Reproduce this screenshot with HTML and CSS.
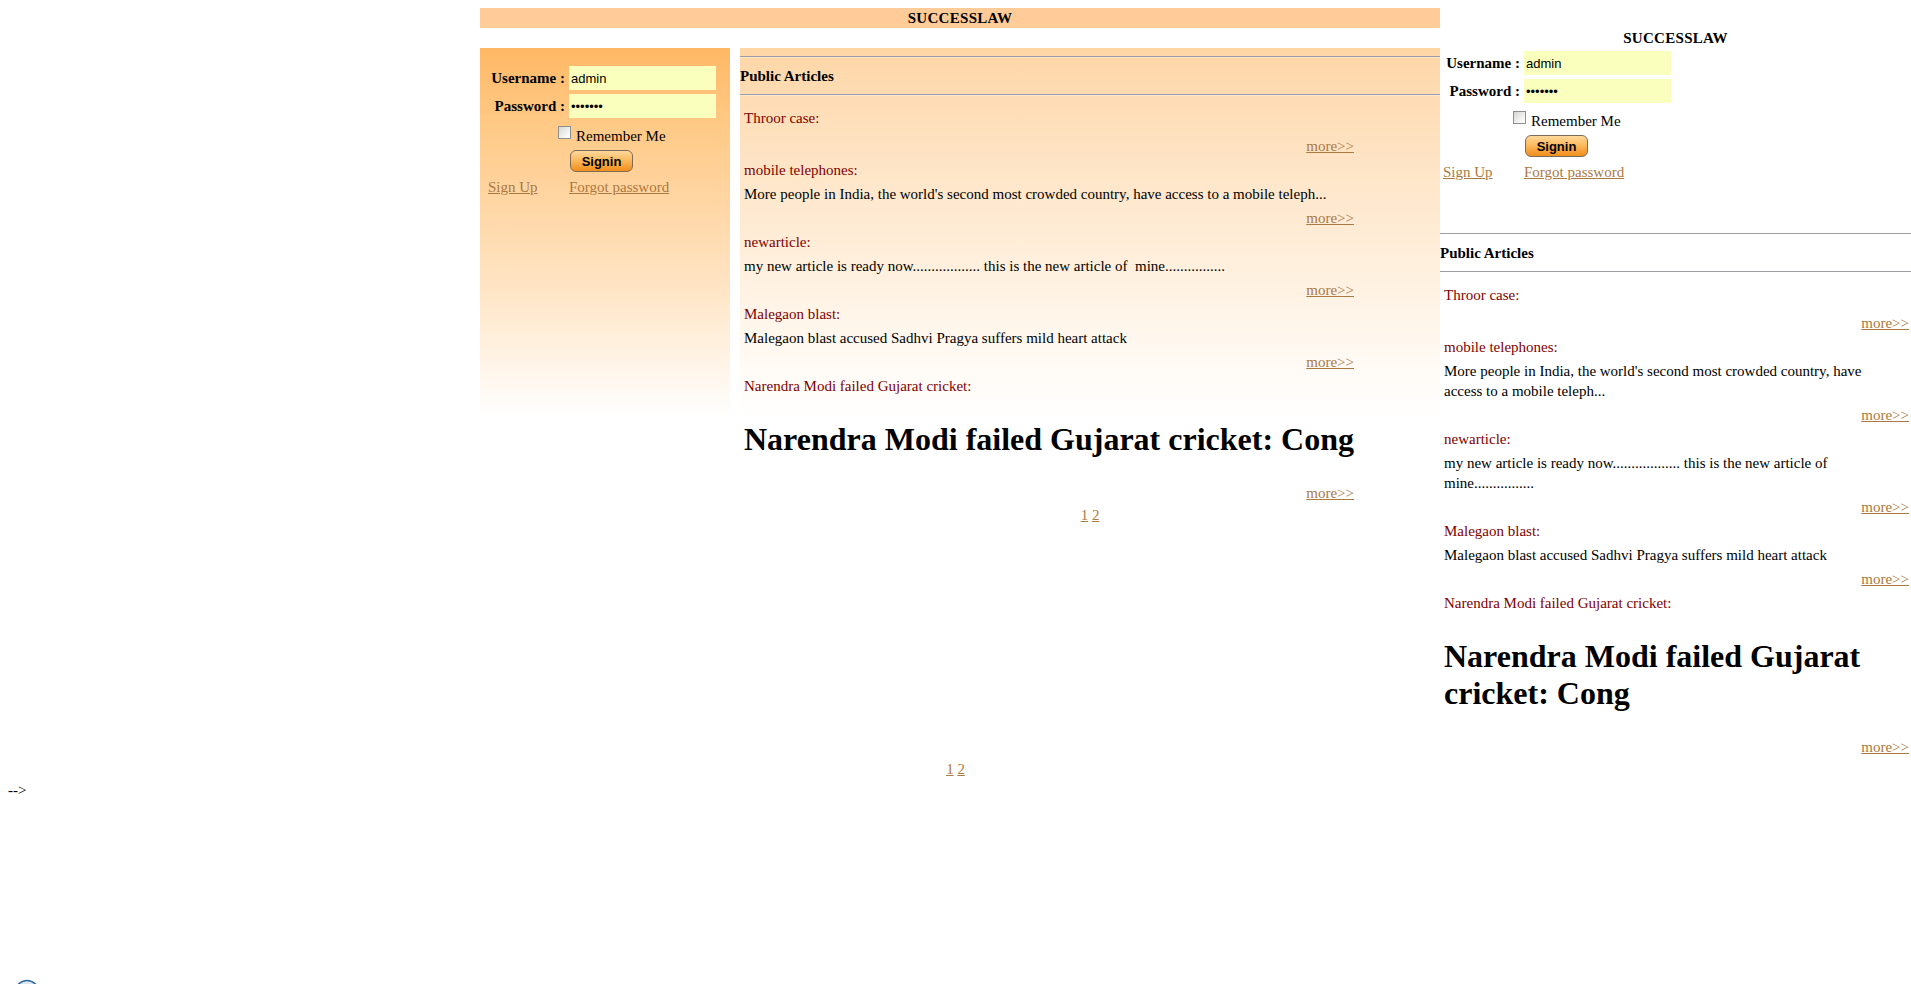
FILE: index.html
```html
<!DOCTYPE html>
<html>
<head>
<meta charset="utf-8">
<title>SUCCESSLAW</title>
<link rel="stylesheet" href="styles.css">
</head>
<body>
<div class="page">
  <div class="layout">
    <div class="main-col">
      <div class="banner">SUCCESSLAW</div>
      <div class="panels">
        <aside class="login-panel">
          <form class="login-form">
            <div class="form-row"><label class="form-label">Username :</label><input class="form-input" type="text" value="admin"></div>
            <div class="form-row"><label class="form-label">Password :</label><input class="form-input" type="password" value="aaaaaaa"></div>
            <div class="remember-row"><input class="remember-box" type="checkbox">Remember Me</div>
            <div class="signin-row"><button class="signin-btn" type="button">Signin</button></div>
            <div class="link-row"><a class="link-first" href="#">Sign Up</a><a href="#">Forgot password</a></div>
          </form>
        </aside>
        <section class="articles-panel">
          <hr class="rule">
          <div class="section-title">Public Articles</div>
          <hr class="rule">
          <div class="article-list">
            <div class="art-title">Throor case:</div>
            <div class="art-body"></div>
            <div class="art-more"><a href="#">more&gt;&gt;</a></div>
            <div class="art-title">mobile telephones:</div>
            <div class="art-body">More people in India, the world's second most crowded country, have access to a mobile teleph...</div>
            <div class="art-more"><a href="#">more&gt;&gt;</a></div>
            <div class="art-title">newarticle:</div>
            <div class="art-body">my new article is ready now.................. this is the new article of&nbsp; mine................</div>
            <div class="art-more"><a href="#">more&gt;&gt;</a></div>
            <div class="art-title">Malegaon blast:</div>
            <div class="art-body">Malegaon blast accused Sadhvi Pragya suffers mild heart attack</div>
            <div class="art-more"><a href="#">more&gt;&gt;</a></div>
            <div class="art-title">Narendra Modi failed Gujarat cricket:</div>
            <div class="art-body"><h1 class="headline">Narendra Modi failed Gujarat cricket: Cong</h1></div>
            <div class="art-more"><a href="#">more&gt;&gt;</a></div>
          </div>
          <div class="pager"><a href="#">1</a> <a href="#">2</a></div>
        </section>
      </div>
    </div>
    <div class="side-col">
      <div class="side-title">SUCCESSLAW</div>
      <form class="login-form side-form">
        <div class="form-row"><label class="form-label">Username :</label><input class="form-input" type="text" value="admin"></div>
        <div class="form-row"><label class="form-label">Password :</label><input class="form-input" type="password" value="aaaaaaa"></div>
        <div class="remember-row"><input class="remember-box" type="checkbox">Remember Me</div>
        <div class="signin-row"><button class="signin-btn" type="button">Signin</button></div>
        <div class="link-row"><a class="link-first" href="#">Sign Up</a><a href="#">Forgot password</a></div>
      </form>
      <div class="side-gap"></div>
      <hr class="rule">
      <div class="section-title">Public Articles</div>
      <hr class="rule">
      <div class="article-list">
        <div class="art-title">Throor case:</div>
        <div class="art-body"></div>
        <div class="art-more"><a href="#">more&gt;&gt;</a></div>
        <div class="art-title">mobile telephones:</div>
        <div class="art-body">More people in India, the world's second most crowded country, have access to a mobile teleph...</div>
        <div class="art-more"><a href="#">more&gt;&gt;</a></div>
        <div class="art-title">newarticle:</div>
        <div class="art-body">my new article is ready now.................. this is the new article of&nbsp; mine................</div>
        <div class="art-more"><a href="#">more&gt;&gt;</a></div>
        <div class="art-title">Malegaon blast:</div>
        <div class="art-body">Malegaon blast accused Sadhvi Pragya suffers mild heart attack</div>
        <div class="art-more"><a href="#">more&gt;&gt;</a></div>
        <div class="art-title">Narendra Modi failed Gujarat cricket:</div>
        <div class="art-body"><h1 class="headline">Narendra Modi failed Gujarat cricket: Cong</h1></div>
        <div class="art-more"><a href="#">more&gt;&gt;</a></div>
      </div>
    </div>
  </div>
  <div class="pager"><a href="#">1</a> <a href="#">2</a></div>
  <div class="comment-tail">--&gt;</div>
  <div class="corner">
    <svg class="corner-icon" width="26" height="26" viewBox="0 0 26 26">
      <defs>
        <linearGradient id="cg" x1="0" y1="0" x2="0" y2="1">
          <stop offset="0" stop-color="#e4eef6"/>
          <stop offset="1" stop-color="#9fbdd6"/>
        </linearGradient>
      </defs>
      <circle cx="13" cy="13" r="11.5" fill="url(#cg)" stroke="#2e6a9e" stroke-width="1.5"/>
      <path d="M4 8 Q13 4 22 8" fill="none" stroke="#6f97bb" stroke-width="1"/>
    </svg>
  </div>
</div>
</body>
</html>
```
FILE: styles.css
```css
html {
  overflow: hidden;
}

html, body {
  margin: 0;
  padding: 0;
}

body {
  font-family: "Liberation Serif", "Times New Roman", serif;
  font-size: 15px;
  line-height: 20px;
  color: #000;
  background: #fff;
}

a {
  color: #ab7942;
}

.page {
  padding-top: 8px;
}

.layout {
  display: grid;
  grid-template-columns: 480px 960px 471px;
  align-items: start;
}

.main-col {
  grid-column: 2;
  grid-row: 1;
}

.banner {
  background: #ffcc99;
  text-align: center;
  font-weight: bold;
  line-height: 20px;
  letter-spacing: 0.3px;
}

.panels {
  display: flex;
  gap: 10px;
  margin-top: 20px;
  align-items: flex-start;
}

.login-panel {
  width: 250px;
  height: 370px;
  box-sizing: border-box;
  padding: 15px 0 0 8px;
  background: linear-gradient(#ffb865 0%, #ffc985 20%, #ffd6a4 42%, #ffe7ca 68%, #fff6ec 88%, #ffffff 100%);
}

.articles-panel {
  flex: 1;
  min-width: 0;
  background: linear-gradient(#fed6a6 0%, #fee4c5 30%, #fff0de 60%, #fffaf4 85%, #ffffff 100%) no-repeat;
  background-size: 100% 370px;
}

.side-col {
  grid-column: 3;
  grid-row: 1;
  margin-top: 20px;
}

.side-title {
  text-align: center;
  font-weight: bold;
  letter-spacing: 0.3px;
}

.login-form {
  margin: 0;
  padding-top: 1px;
}

.side-form {
  padding-left: 3px;
}

.form-row {
  display: flex;
  align-items: center;
  padding: 2px 0;
}

.form-label {
  width: 81px;
  box-sizing: border-box;
  padding-right: 4px;
  text-align: right;
  font-weight: bold;
  white-space: nowrap;
}

.form-input {
  width: 147px;
  height: 24px;
  box-sizing: border-box;
  border: 0;
  margin: 0;
  padding: 0 2px;
  background: #faffbd;
  font: 13px "Liberation Sans", Arial, sans-serif;
  color: #000;
  outline: none;
}

.remember-row {
  padding: 6px 0 2px 70px;
}

.remember-box {
  appearance: none;
  -webkit-appearance: none;
  width: 13px;
  height: 13px;
  margin: 0 5px 0 0;
  box-sizing: border-box;
  border: 1px solid #8d8f91;
  background: linear-gradient(135deg, #d6d6d2, #f6f6f4 70%, #ffffff);
  vertical-align: 2px;
}

.signin-row {
  padding: 2px 0 2px 82px;
}

.signin-btn {
  display: block;
  width: 63px;
  height: 22px;
  box-sizing: border-box;
  margin: 0;
  padding: 0;
  border: 1px solid #7d6b58;
  border-radius: 6px;
  background: linear-gradient(#ffd89c 0%, #fcbb5e 45%, #f6a13a 75%, #f08f1c 100%);
  font: bold 13px "Liberation Sans", Arial, sans-serif;
  color: #000;
}

.link-row {
  display: flex;
  padding: 3px 0 2px;
}

.link-first {
  width: 81px;
  flex: none;
}

.side-gap {
  height: 41px;
}

.rule {
  margin: 8px 0;
  height: 0;
  border: 0;
  border-top: 1px solid #9b9ea6;
  border-bottom: 1px solid rgba(255, 255, 255, 0.35);
}

.section-title {
  font-weight: bold;
}

.article-list {
  width: fit-content;
  max-width: 100%;
  padding-top: 2px;
}

.art-title,
.art-body,
.art-more {
  padding: 2px 2px 2px 4px;
}

.side-col .art-body {
  padding-right: 9px;
}

.art-title {
  color: #800000;
}

.art-more {
  text-align: right;
}

.headline {
  margin: 21px 0;
  font-size: 32px;
  line-height: 37px;
  font-weight: bold;
}

.pager {
  text-align: center;
}

.comment-tail {
  padding-left: 8px;
  padding-top: 1px;
}

.corner {
  height: 5px;
  overflow: hidden;
  margin-top: 179px;
  padding-left: 14px;
}

.corner-icon {
  display: block;
}
```
